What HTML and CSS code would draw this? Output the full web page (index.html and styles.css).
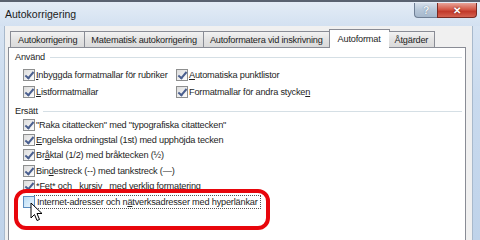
FILE: index.html
```html
<!DOCTYPE html>
<html lang="sv">
<head>
    <meta charset="UTF-8">
    <title>Autokorrigering</title>
    <link rel="stylesheet" href="styles.css">
</head>
<body>
    <div class="window">
        <div class="titlebar">
            <span class="title">Autokorrigering</span>
            <div class="caption-buttons">
                <span class="cap-btn help">?</span>
                <span class="cap-btn close">&#x2715;</span>
            </div>
        </div>

        <div class="client">
            <div class="tabs">
                <span class="tab">Autokorrigering</span>
                <span class="tab">Matematisk autokorrigering</span>
                <span class="tab">Autoformatera vid inskrivning</span>
                <span class="tab selected">Autoformat</span>
                <span class="tab">Åtgärder</span>
            </div>

            <div class="panel">
                <!-- Använd -->
                <div class="group-title"><span>Använd</span></div>
                <div class="grid">
                    <label class="check"><span class="box on"></span><span><u>I</u>nbyggda formatmallar för rubriker</span></label>
                    <label class="check"><span class="box on"></span><span><u>A</u>utomatiska punktlistor</span></label>
                    <label class="check"><span class="box on"></span><span><u>L</u>istformatmallar</span></label>
                    <label class="check"><span class="box on"></span><span>Formatmallar för andra stycke<u>n</u></span></label>
                </div>

                <!-- Ersätt -->
                <div class="group-title second"><span>Ersätt</span></div>
                <div class="list">
                    <label class="check"><span class="box on"></span><span>"Raka citattecken" med "typografiska citattecken"</span></label>
                    <label class="check"><span class="box on"></span><span><u>E</u>ngelska ordningstal (1st) med upphöjda tecken</span></label>
                    <label class="check"><span class="box on"></span><span>Br<u>å</u>ktal (1/2) med bråktecken (½)</span></label>
                    <label class="check"><span class="box on"></span><span>Bin<u>d</u>estreck (--) med tankstreck (—)</span></label>
                    <label class="check"><span class="box on"></span><span>*Fet* och _kursiv_ med verklig formatering</span></label>
                    <label class="check"><span class="box hover"></span><span class="focus">Internet-adresser och n<u>ä</u>tverksadresser med hyperlänkar</span></label>
                </div>

                <div class="highlight"></div>
                <svg class="cursor" width="13" height="20" viewBox="0 0 13 20">
                    <path d="M1 1 L1 16 L4.5 12.5 L7 18.5 L9.5 17.5 L7 11.5 L12 11.5 Z" fill="#fff" stroke="#000" stroke-width="1" stroke-linejoin="round"/>
                </svg>
            </div>
        </div>
    </div>
</body>
</html>
```

FILE: styles.css
```css
body, html {
    margin: 0;
    height: 100%;
    overflow: hidden;
    font-family: 'Liberation Sans', Arial, sans-serif;
    font-size: 9.2px;
    letter-spacing: -0.2px;
    color: #1e1e1e;
}

.window {
    width: 480px;
    height: 240px;
    background: linear-gradient(to bottom, #dce7f4, #c9daee 40%, #bfd3ea);
    border-top: 2px solid #5a6270;
    box-sizing: border-box;
    display: flex;
    flex-direction: column;
}

.titlebar {
    height: 24px;
    flex: none;
    display: flex;
    align-items: flex-start;
    justify-content: space-between;
    background: linear-gradient(to bottom, #e4ecf6, #d3e1f1);
}

.title {
    font-size: 10.5px;
    letter-spacing: 0;
    margin: 6px 0 0 5px;
    color: #1b1b1b;
}

.caption-buttons {
    display: flex;
    margin-right: 3px;
    margin-top: 1px;
}

.cap-btn {
    height: 15px;
    display: flex;
    align-items: center;
    justify-content: center;
    border: 1px solid #6f7f95;
    border-top: none;
    color: #fff;
    font-weight: bold;
    letter-spacing: 0;
    box-sizing: border-box;
}

.help {
    width: 23px;
    border-radius: 0 0 0 4px;
    border-right: none;
    background: linear-gradient(to bottom, #d5dfea, #b6c6d8 50%, #a6b8cc);
    color: #eef3f8;
    font-size: 11px;
    text-shadow: 0 0 1px #53667d;
}

.close {
    width: 40px;
    border-radius: 0 0 4px 0;
    border-color: #7a2a22;
    background: linear-gradient(to bottom, #e8a397, #d45a49 45%, #c2392a 60%, #d46250);
    font-size: 10px;
    text-shadow: 0 0 2px #6b1b12;
}

.client {
    flex: 1;
    margin: 0 7px 0 4px;
    background: #f0f0f0;
    border-left: 1px solid #a8b9cc;
    border-right: 1px solid #a8b9cc;
    padding: 3px 0 0 3px;
    display: flex;
    flex-direction: column;
}

.tabs {
    display: flex;
    align-items: flex-end;
    padding-left: 2px;
    height: 18px;
    flex: none;
    position: relative;
    z-index: 1;
}

.tab {
    height: 16px;
    padding: 0 6px;
    box-sizing: border-box;
    display: flex;
    align-items: center;
    border: 1px solid #898c95;
    border-bottom: none;
    border-right: none;
    background: linear-gradient(to bottom, #f2f2f2, #e3e3e3 50%, #dadada);
    white-space: nowrap;
}

.tab:first-child {
    padding: 0 7px;
}

.tab:nth-child(5) {
    border-right: 1px solid #898c95;
}

.tab.selected {
    height: 19px;
    margin-bottom: -1px;
    padding: 0 8px 1px;
    background: #fff;
    border-right: 1px solid #898c95;
    margin-right: -1px;
}

.tab.selected + .tab {
    border-left: none;
}

.panel {
    flex: 1;
    margin-right: 6px;
    background: #fff;
    border: 1px solid #898c95;
    border-bottom: none;
    position: relative;
    padding: 3px 3px 0 6px;
}

.group-title {
    display: flex;
    align-items: center;
    height: 12px;
}

.group-title::after {
    content: "";
    flex: 1;
    height: 1px;
    background: #d5dfe5;
    margin-left: 5px;
}

.group-title.second {
    margin-top: 5px;
}

.grid {
    display: grid;
    grid-template-columns: 153px auto;
    padding: 4px 0 0 8px;
}

.list {
    padding: 0 0 0 8px;
}

.check {
    display: flex;
    align-items: center;
    height: 15.4px;
    white-space: nowrap;
}

.grid .check {
    height: 16.5px;
}

.box {
    width: 12px;
    height: 12px;
    box-sizing: border-box;
    border: 1px solid #8e8f8f;
    background: linear-gradient(135deg, #dcdcdc, #fdfdfd);
    margin-right: 1px;
    flex: none;
    position: relative;
}

.box.on::after {
    content: "";
    position: absolute;
    left: 3px;
    top: 0px;
    width: 3px;
    height: 7px;
    border: solid #4a5f8f;
    border-width: 0 2px 2px 0;
    transform: rotate(40deg);
}

.box.hover {
    border-color: #5b8dc0;
    background: linear-gradient(135deg, #b9dcf5, #eef7fd);
}

.focus {
    outline: 1px dotted #555;
    outline-offset: 1px;
    padding: 0 1px;
}

u {
    text-decoration: underline;
    text-underline-offset: 1px;
}

.highlight {
    position: absolute;
    left: 5px;
    top: 141px;
    width: 248px;
    height: 33px;
    border: 4px solid #e8060c;
    border-radius: 12px;
    pointer-events: none;
}

.cursor {
    position: absolute;
    left: 21px;
    top: 154px;
}
```
